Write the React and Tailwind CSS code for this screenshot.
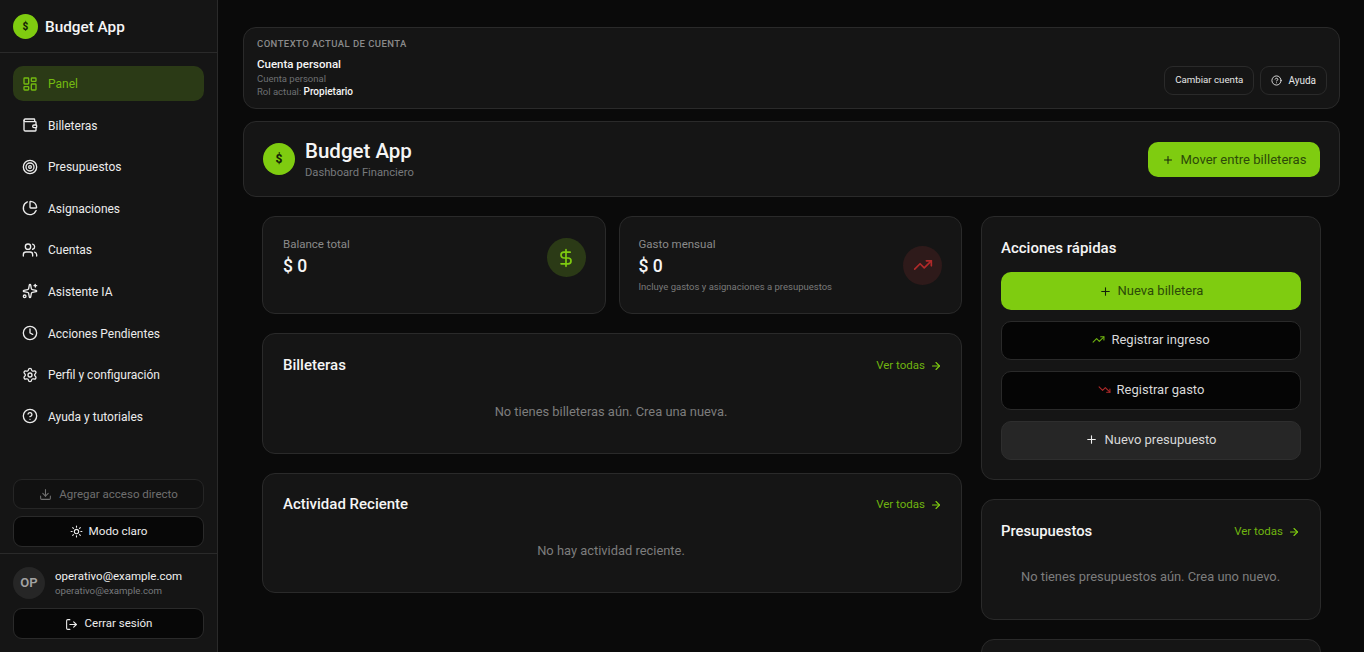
import React from 'react';
import {
  LayoutDashboard, Wallet, Target, ChartPie, Users, Sparkles, Clock, Settings, CircleHelp,
  Download, Sun, LogOut, Plus, DollarSign, TrendingUp, TrendingDown, ArrowRight,
} from 'lucide-react';

const navItems = [
  { label: 'Panel', icon: LayoutDashboard, active: true },
  { label: 'Billeteras', icon: Wallet },
  { label: 'Presupuestos', icon: Target },
  { label: 'Asignaciones', icon: ChartPie },
  { label: 'Cuentas', icon: Users },
  { label: 'Asistente IA', icon: Sparkles },
  { label: 'Acciones Pendientes', icon: Clock },
  { label: 'Perfil y configuración', icon: Settings },
  { label: 'Ayuda y tutoriales', icon: CircleHelp },
];

const card = 'rounded-[13px] border border-[#2a2a2a] bg-[#151515]';

const VerTodas = () => (
  <a className="flex items-center gap-[5px] pt-[2px] text-[11.5px] text-[#6fb310]">
    Ver todas <ArrowRight size={12} strokeWidth={2.25} className="text-[#7fcc10]" />
  </a>
);

const Sidebar = () => (
  <aside className="flex h-[652px] w-[218px] shrink-0 flex-col border-r border-[#2a2a2a] bg-[#151515]">
    <div className="flex h-[53px] items-center gap-[7px] border-b border-[#2a2a2a] pl-[13px]">
      <div className="flex h-[25px] w-[25px] items-center justify-center rounded-full bg-[#7fcc10] text-[10px] font-extrabold text-[#141f06]">$</div>
      <span className="pt-[3px] text-[15.3px] font-medium text-[#f5f5f5]">Budget App</span>
    </div>
    <nav className="flex flex-1 flex-col gap-[6.6px] px-[13px] pt-[13px]">
      {navItems.map(({ label, icon: Icon, active }) => (
        <div
          key={label}
          className={`flex h-[35px] items-center gap-[10px] rounded-[10px] pl-[9px] text-[12px] ${active ? 'bg-[#2b3a16] text-[#74bb10]' : 'text-[#ececec]'}`}
        >
          <Icon size={16} strokeWidth={2} />
          <span className="pt-[1px]">{label}</span>
        </div>
      ))}
    </nav>
    <div className="flex flex-col gap-[7px] px-[13px] pb-[6px]">
      <button className="flex h-[30px] items-center justify-center gap-[7px] rounded-[9px] border border-[#262626] bg-[#111111] pt-[1px] text-[11.5px] text-[#6f6f6f]">
        <Download size={13} /> Agregar acceso directo
      </button>
      <button className="flex h-[31px] items-center justify-center gap-[6px] rounded-[9px] border border-[#2a2a2a] bg-[#070707] text-[11.7px] text-[#ececec]">
        <Sun size={13} /> Modo claro
      </button>
    </div>
    <div className="flex flex-col gap-[9px] border-t border-[#2a2a2a] px-[13px] pb-[13px] pt-[13px]">
      <div className="flex items-center gap-[10px]">
        <div className="flex h-[32px] w-[32px] items-center justify-center rounded-full bg-[#262626] text-[13px] font-semibold text-[#a3a3a3]">OP</div>
        <div className="flex flex-col">
          <span className="text-[11.5px] leading-[15px] text-[#f0f0f0]">operativo@example.com</span>
          <span className="text-[9.7px] leading-[14px] text-[#77797c]">operativo@example.com</span>
        </div>
      </div>
      <button className="flex h-[31px] items-center justify-center gap-[7px] rounded-[9px] border border-[#2a2a2a] bg-[#070707] pt-[1px] text-[11.5px] text-[#ececec]">
        <LogOut size={13} /> Cerrar sesión
      </button>
    </div>
  </aside>
);

const ActionButton = ({ icon: Icon, iconClass, label, className }) => (
  <button className={`flex items-center justify-center gap-[6px] rounded-[10px] text-[13px] ${className}`}>
    <Icon size={13} className={iconClass} /> {label}
  </button>
);

const App = () => (
  <div
    className="flex h-[652px] w-[1364px] overflow-hidden bg-[#0a0a0a]"
    style={{ fontFamily: 'Roboto, sans-serif' }}
  >
    <Sidebar />
    <main className="flex min-w-0 flex-1 flex-col overflow-hidden pl-[25px] pr-[24px] pt-[27px]">
      <section className={`${card} flex h-[82px] shrink-0 items-end justify-between pb-[13px] pl-[13px] pr-[12px] pt-[10px]`}>
        <div className="self-start">
          <p className="text-[9.5px] font-medium uppercase leading-[12px] tracking-[0.43px] text-[#8a8a8a]">Contexto actual de cuenta</p>
          <p className="mt-[7px] text-[11.5px] font-medium leading-[14px] text-[#f5f5f5]">Cuenta personal</p>
          <p className="mt-[1px] text-[9.5px] leading-[13px] text-[#6e7073]">Cuenta personal</p>
          <p className="text-[9.5px] leading-[13px] text-[#6e7073]">
            Rol actual: <span className="text-[10px] font-medium text-[#f5f5f5]">Propietario</span>
          </p>
        </div>
        <div className="flex gap-[6px]">
          <button className="flex h-[29px] items-center rounded-[9px] border border-[#2a2a2a] px-[10px] text-[9.7px] text-[#e5e5e5]">Cambiar cuenta</button>
          <button className="flex h-[29px] items-center gap-[6px] rounded-[9px] border border-[#2a2a2a] px-[10px] text-[10px] text-[#e5e5e5]">
            <CircleHelp size={11} /> Ayuda
          </button>
        </div>
      </section>

      <section className={`${card} mt-[12px] flex h-[76px] shrink-0 items-center justify-between pl-[19px] pr-[19px]`}>
        <div className="flex items-center gap-[10px]">
          <div className="flex h-[32px] w-[32px] items-center justify-center rounded-full bg-[#7fcc10] text-[12px] font-extrabold text-[#141f06]">$</div>
          <div className="pt-[2px]">
            <h1 className="text-[20.5px] font-medium leading-[23px] text-[#f5f5f5]">Budget App</h1>
            <p className="pt-[2px] text-[11.2px] leading-[16px] text-[#77797c]">Dashboard Financiero</p>
          </div>
        </div>
        <button className="flex h-[35px] w-[172px] items-center justify-center gap-[7px] rounded-[10px] bg-[#7fcc10] pt-[1px] text-[13.1px] text-[#2c4a08]">
          <Plus size={12} className="text-[#14210a]" /> Mover entre billeteras
        </button>
      </section>

      <div className="mt-[19px] grid grid-cols-[700px_340px] gap-[19px] pl-[19px]">
        <div className="flex flex-col gap-[19px]">
          <div className="grid grid-cols-2 gap-[13px]">
            <div className={`${card} flex h-[98px] justify-between pl-[20px] pr-[19px] pt-[20px]`}>
              <div>
                <p className="text-[11.5px] leading-[15px] text-[#8a8a8a]">Balance total</p>
                <p className="mt-[3px] text-[17.5px] font-medium leading-[22px] text-[#f5f5f5]">$ 0</p>
              </div>
              <div className="mt-[1px] flex h-[39px] w-[39px] items-center justify-center rounded-full bg-[#2b3a16]">
                <DollarSign size={20} className="text-[#7fcc10]" />
              </div>
            </div>
            <div className={`${card} flex h-[98px] items-center justify-between pl-[19px] pr-[19px]`}>
              <div>
                <p className="text-[11.5px] leading-[15px] text-[#8a8a8a]">Gasto mensual</p>
                <p className="mt-[3px] text-[17.5px] font-medium leading-[22px] text-[#f5f5f5]">$ 0</p>
                <p className="mt-[3px] text-[9.5px] leading-[13px] text-[#7a7a7a]">Incluye gastos y asignaciones a presupuestos</p>
              </div>
              <div className="flex h-[39px] w-[39px] items-center justify-center rounded-full bg-[#2e1a1a]">
                <TrendingUp size={20} className="text-[#b02a2a]" />
              </div>
            </div>
          </div>

          <div className={`${card} h-[121px] pl-[20px] pr-[19px] pt-[21px]`}>
            <div className="flex items-center justify-between">
              <h2 className="text-[15px] font-medium leading-[20px] text-[#f5f5f5]">Billeteras</h2>
              <VerTodas />
            </div>
            <p className="mt-[27px] pr-[3px] text-center text-[12.9px] text-[#7d7d7d]">No tienes billeteras aún. Crea una nueva.</p>
          </div>

          <div className={`${card} h-[120px] pl-[20px] pr-[19px] pt-[20px]`}>
            <div className="flex items-center justify-between">
              <h2 className="text-[15px] font-medium leading-[20px] text-[#f5f5f5]">Actividad Reciente</h2>
              <VerTodas />
            </div>
            <p className="mt-[27px] pr-[3px] text-center text-[12.9px] text-[#7d7d7d]">No hay actividad reciente.</p>
          </div>
        </div>

        <div className="flex flex-col gap-[19px]">
          <div className={`${card} h-[264px] px-[19px] pt-[21px]`}>
            <h2 className="text-[15px] font-medium leading-[20px] text-[#f5f5f5]">Acciones rápidas</h2>
            <div className="mt-[14px] flex flex-col gap-[10.5px]">
              <ActionButton icon={Plus} iconClass="text-[#14210a]" label="Nueva billetera" className="h-[38px] bg-[#7fcc10] text-[#2c4a08]" />
              <ActionButton icon={TrendingUp} iconClass="text-[#6fb310]" label="Registrar ingreso" className="h-[39.5px] border border-[#2a2a2a] bg-[#050505] pb-[2px] text-[#d8d8d8]" />
              <ActionButton icon={TrendingDown} iconClass="text-[#b02a2a]" label="Registrar gasto" className="h-[39.5px] border border-[#2a2a2a] bg-[#050505] pb-[2px] text-[#d8d8d8]" />
              <ActionButton icon={Plus} iconClass="text-[#f0f0f0]" label="Nuevo presupuesto" className="h-[39.5px] border border-[#2e2e2e] bg-[#262626] pb-[2px] text-[#d8d8d8]" />
            </div>
          </div>
          <div className={`${card} h-[121px] pl-[19px] pr-[20px] pt-[21px]`}>
            <div className="flex items-center justify-between">
              <h2 className="text-[14.8px] font-medium leading-[20px] text-[#f5f5f5]">Presupuestos</h2>
              <VerTodas />
            </div>
            <p className="mt-[26px] text-center text-[12.9px] text-[#7d7d7d]">No tienes presupuestos aún. Crea uno nuevo.</p>
          </div>
          <div className={`${card} h-[120px]`} />
        </div>
      </div>
    </main>
  </div>
);

export default App;
